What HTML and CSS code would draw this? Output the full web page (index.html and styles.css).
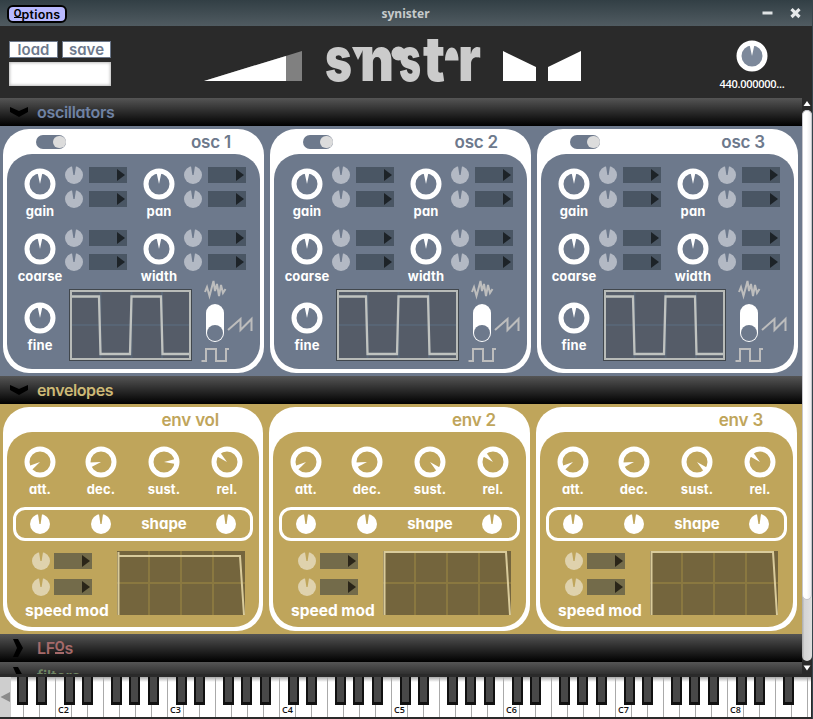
FILE: index.html
```html
<!DOCTYPE html>
<html lang="en">
<head>
<meta charset="utf-8">
<title>synister</title>
<link rel="stylesheet" href="styles.css">
</head>
<body>
<div class="window">
  <header class="titlebar">
    <button class="options"><span class="cap-o">O</span>ptions</button>
    <h1 class="window-title">synister</h1>
    <svg class="window-buttons" width="44" height="14" viewBox="0 0 44 14">
      <path d="M2.500 7H12.500" stroke="#dfe3e4" stroke-width="3"/>
      <path d="M31.500 3.200L39.500 11M39.500 3.200L31.500 11" stroke="#e6e9ea" stroke-width="3.200"/>
    </svg>
  </header>

  <div class="topbar">
    <div class="presets">
      <div class="preset-buttons"><button>load</button><button>save</button></div>
      <div class="preset-name"></div>
    </div>
    <svg class="volume" width="98" height="30" viewBox="0 0 98 30">
      <path d="M0 30L98 0V30Z" fill="#808080"/>
      <path d="M0 30L82 4.900V30Z" fill="#fff"/>
    </svg>
    <svg class="logo" width="156" height="42" viewBox="0 0 156 42">
      <g class="logo-letters">
        <text x="0" y="40" textLength="27" lengthAdjust="spacingAndGlyphs">s</text>
        <text x="35" y="40" textLength="34" lengthAdjust="spacingAndGlyphs">n</text>
        <text x="74" y="40" textLength="22" lengthAdjust="spacingAndGlyphs">s</text>
        <text x="98" y="40" textLength="22" lengthAdjust="spacingAndGlyphs">t</text>
        <text x="133" y="40" textLength="23" lengthAdjust="spacingAndGlyphs">r</text>
      </g>
      <path d="M27 6H39.500L33 19Z"/>
      <circle cx="73.500" cy="12.500" r="7"/>
      <path d="M120 19.500C120 2 133.500 2 133.500 19.500Z"/>
    </svg>
    <svg class="pan-shapes" width="78" height="30" viewBox="0 0 78 30">
      <path d="M0 0L33 16V30H0ZM78 0L45 16V30H78Z" fill="#fff"/>
    </svg>
    <div class="tuning">
      <svg width="32" height="32" viewBox="-16 -16 32 32">
        <circle r="13" fill="#7d899b" stroke="#fff" stroke-width="5"/>
        <path d="M-2.500 -11.500H2.500L0 0Z" fill="#fff"/>
      </svg>
      <span>440.000000...</span>
    </div>
  </div>

  <div class="main">
    <div class="sections">
      <h2 class="bar bar-osc"><svg width="20" height="12" viewBox="0 0 20 12"><path d="M1 1L10 5L19 1V6L10 11L1 6Z"/></svg><span>oscillators</span></h2>
      <section class="rack rack-osc" id="oscillators"></section>
      <h2 class="bar bar-env"><svg width="20" height="12" viewBox="0 0 20 12"><path d="M1 1L10 5L19 1V6L10 11L1 6Z"/></svg><span>envelopes</span></h2>
      <section class="rack rack-env" id="envelopes"></section>
      <h2 class="bar bar-lfo"><svg width="20" height="20" viewBox="0 0 20 20"><path d="M4 1H9L14 10L9 19H4L8 10Z"/></svg><span>LF<span class="cap-o">O</span>s</span></h2>
      <h2 class="bar bar-filter"><svg width="20" height="20" viewBox="0 0 20 20"><path d="M4 1H9L14 10L9 19H4L8 10Z"/></svg><span>filters</span></h2>
    </div>
    <div class="scrollbar">
      <svg width="10" height="12" viewBox="0 0 10 12"><path d="M1.500 8L5 3L8.500 8Z" fill="#fff"/></svg>
      <div class="track"><div class="thumb"></div></div>
      <svg width="10" height="13" viewBox="0 0 10 13"><path d="M1.500 4.500L5 9.500L8.500 4.500Z" fill="#fff"/></svg>
    </div>
  </div>

  <div class="keyboard">
    <div class="key-scroll"><svg width="11" height="40" viewBox="0 0 11 40"><path d="M.5 20L10 15V25Z" fill="#8a8a8a"/></svg></div>
    <div class="keys" id="keys"></div>
  </div>
</div>
<script src="app.js"></script>
</body>
</html>
```
FILE: styles.css
```css
* { box-sizing: border-box; }
body {
  margin: 0;
  background: #2a2a2a;
  font-family: Inter, "Noto Sans", sans-serif;
  font-feature-settings: "cv11";
}
h1, h2, h3 { margin: 0; font-weight: 600; }
button { font: inherit; font-feature-settings: inherit; padding: 0; }
svg { display: block; flex: none; }
.window { width: 813px; height: 719px; overflow: hidden; border-right: 1px solid #36444b; }

.titlebar {
  height: 26px;
  padding: 0 8px 0 7px;
  display: grid;
  grid-template-columns: 60px 1fr 60px;
  align-items: center;
  background: linear-gradient(#323f45, #505b61);
}
.options {
  width: 60px;
  height: 18px;
  margin-top: 2px;
  border: 2px solid #000;
  border-radius: 6px;
  background: #b9b9ff;
  color: #000;
  font-size: 12.5px;
  line-height: 13px;
  font-weight: 600;
  letter-spacing: .2px;
}
.cap-o {
  display: inline-block;
  font-size: .8em;
  line-height: .9;
  vertical-align: .2em;
  font-weight: 700;
  border-bottom: 2px solid;
}
.options .cap-o { line-height: .8; vertical-align: .12em; border-bottom-width: 1px; }
.window-title { text-align: center; font: 700 12px "Noto Sans", sans-serif; color: #c6cacb; }
.window-buttons { justify-self: end; }

.topbar { height: 72px; display: flex; align-items: flex-start; background: #2a2a2a; }
.presets { width: 102px; margin: 15px 0 0 9px; }
.preset-buttons { display: flex; justify-content: space-between; }
.preset-buttons button {
  width: 49px;
  height: 17px;
  border: 1px solid #6d798c;
  background: #fff;
  color: #6d798c;
  font-size: 15px;
  line-height: 14px;
  font-weight: 600;
}
.preset-name { height: 24px; margin-top: 4px; background: #fff; box-shadow: inset 0 0 3px 1px #bbb; }
.volume { margin: 25px 0 0 93px; }
.logo { margin: 15px 0 0 23px; fill: #cbcbcb; overflow: visible; }
.logo-letters { font-size: 62px; font-weight: 900; }
.pan-shapes { margin: 25px 0 0 22px; }
.tuning { width: 70px; margin: 14px 0 0 136px; display: flex; flex-direction: column; align-items: center; color: #fff; }
.tuning span { font: 600 11px/14px "Open Sans", sans-serif; letter-spacing: -.3px; margin-top: 5px; white-space: nowrap; }

.main { height: 576px; display: flex; }
.sections { width: 802px; overflow: hidden; }
.bar {
  height: 28px;
  padding-left: 9px;
  display: flex;
  align-items: center;
  gap: 8px;
  background: linear-gradient(#555, #222 60%, #000);
  font-size: 16px;
  line-height: 26px;
  letter-spacing: -.3px;
}
.bar > span { padding-bottom: 1px; }
.bar-osc { color: #6f82a3; }
.bar-env { color: #cdb976; letter-spacing: -.4px; }
.bar-lfo { color: #a56a6a; }
.bar-filter { color: #6f8463; }

.scrollbar { width: 10px; background: #2a2a2a; }
.track { height: 551px; border-radius: 5px; background: linear-gradient(90deg, #aaa, #d4d4d4 25%, #dedede); }
.thumb { height: 490px; border-radius: 5px; border: 1px solid #c6c6cc; background: linear-gradient(90deg, #fff 45%, #ececee); }

.rack { display: flex; gap: 6px; padding: 3px; }
.rack-osc { height: 250px; --tone: #6d798c; --mod: #b3b9c4; --slot: #4a5664; --slot-arrow: #1d2328; background: var(--tone); }
.rack-env { height: 230px; --tone: #bfa55b; --mod: #dfd2ad; --slot: #736b4a; --slot-arrow: #2a2518; background: var(--tone); }
.panel { flex: none; width: 261px; padding: 0 4px 4px; border-radius: 26px; background: #fff; }
.rack-osc .panel { height: 244px; }
.rack-env .panel { height: 224px; }
.rack-env .panel:first-child { width: 260px; }
.panel-head { height: 25px; display: flex; justify-content: space-between; align-items: center; padding: 0 29px; color: var(--tone); }
.panel-head h3 { font-size: 17px; line-height: 25px; letter-spacing: -.2px; margin: 2px 0 0 auto; }
.rack-env .panel-head { padding-right: 40px; }
.rack-env .panel:not(:first-child) .panel-head { padding-right: 30px; }
.panel-body { border-radius: 25px; background: var(--tone); color: #fff; }
.rack-osc .panel-body { height: 215px; }
.rack-env .panel-body { height: 195px; }
.toggle { width: 30px; height: 14px; border-radius: 7px; background: var(--tone); display: flex; justify-content: flex-end; padding: 1px 0; }
.toggle i { width: 13px; height: 12px; border-radius: 6px; background: #dcdcdc; }

.dial { flex: none; display: flex; flex-direction: column; align-items: center; width: 50px; }
.dial span { font-size: 13px; line-height: 16px; font-weight: 700; margin-top: 3px; letter-spacing: .1px; white-space: nowrap; }
.mod { display: flex; align-items: center; gap: 6px; height: 18px; }
.slot { flex: none; width: 38px; height: 16px; padding: 2px 1px 0 0; background: var(--slot); display: flex; justify-content: flex-end; }
.slot path { fill: var(--slot-arrow); }

.params { display: grid; grid-template-columns: 119px 119px; grid-auto-rows: 65px; }
.param { display: flex; padding-left: 8px; }
.param .dial { padding-top: 14px; }
.mods { flex: none; display: flex; flex-direction: column; gap: 6px; padding-top: 12px; }
.param:nth-child(n+3) .mods { padding-top: 10px; }
.osc-bottom { display: flex; padding-left: 8px; }
.osc-bottom .dial { padding-top: 18px; }
.scope { margin: 5px 0 0 4px; }
.wave-select { margin: -6px 0 0 8px; }

.adsr { display: grid; grid-template-columns: 61px 63px 63px 50px; padding: 14px 0 0 8px; }
.shape-row {
  height: 34px;
  margin: 10px 6px 0;
  border: 3px solid #fff;
  border-radius: 12px;
  display: grid;
  grid-template-columns: 48px 74px 52px 1fr;
  align-items: center;
  font-size: 15px;
  font-weight: 700;
}
.shape-row span { justify-self: center; line-height: 20px; margin-top: -1px; }
.shape-row svg { justify-self: start; margin-left: 14px; }
.shape-row svg:nth-child(2) { margin-left: 27px; }
.shape-row svg:last-child { margin-left: 26px; }
.env-bottom { display: flex; justify-content: space-between; padding: 10px 14px 0 18px; }
.panel:not(:first-child) .env-bottom { padding-right: 15px; }
.speed { width: 92px; padding-top: 1px; }
.speed .mod { margin-left: 7px; gap: 4px; }
.speed .mod + .mod { margin-top: 8px; }
.speed span { display: block; font-size: 15.500px; line-height: 20px; font-weight: 700; margin-top: 5px; white-space: nowrap; }

.keyboard { height: 45px; padding-top: 3px; display: flex; background: #2a2a2a; }
.key-scroll { width: 11px; height: 40px; background: #cecece; }
.keys { position: relative; width: 800px; height: 40px; display: flex; overflow: hidden; background: #fff; }
.white { flex: none; width: 16px; height: 40px; border-right: 1px solid #aaa; background: linear-gradient(#aaa, #fff 5px); display: flex; align-items: flex-end; justify-content: center; color: #111; font: 600 9px/15px "Open Sans", sans-serif; }
.white:first-child { width: 13px; }
.black { position: absolute; top: 0; width: 11px; height: 28px; border: solid #111; border-width: 0 2px 3px; background: #484848; }
```
FILE: app.js
```js
const dial = (label, angle = 0) => `
  <div class="dial">
    <svg width="32" height="32" viewBox="-16 -16 32 32">
      <circle r="13" fill="none" stroke="#fff" stroke-width="5"/>
      <path d="M-2.500 -11.500H2.500L0 0Z" fill="#fff" transform="rotate(${angle})"/>
    </svg>
    <span>${label}</span>
  </div>`;

const notched = (r, fill) => `
  <svg width="${r * 2}" height="${r * 2}" viewBox="${-r} ${-r} ${r * 2} ${r * 2}">
    <circle r="${r}" fill="${fill}"/>
    <path d="M-2 ${-r}H2L.6 0H-.6Z" fill="var(--tone)"/>
  </svg>`;

const mod = () => `
  <div class="mod">${notched(9, 'var(--mod)')}
    <div class="slot"><svg width="9" height="12" viewBox="0 0 9 12"><path d="M0 0L8 6L0 12Z"/></svg></div>
  </div>`;

const param = label => `<div class="param">${dial(label)}<div class="mods">${mod()}${mod()}</div></div>`;

const oscillator = name => `
  <article class="panel">
    <div class="panel-head"><div class="toggle"><i></i></div><h3>${name}</h3></div>
    <div class="panel-body">
      <div class="params">${['gain', 'pan', 'coarse', 'width'].map(param).join('')}</div>
      <div class="osc-bottom">
        ${dial('fine')}
        <svg class="scope" width="123" height="72" viewBox="0 0 123 72">
          <rect x=".5" y=".5" width="122" height="71" fill="#555c68" stroke="#41474d"/>
          <rect x="2" y="2" width="119" height="68" fill="none" stroke="#b8bbb8" stroke-width="2"/>
          <path d="M3 36H120M31.500 3V69M62.500 3V69M93 3V69" stroke="#586575" stroke-width="2" fill="none"/>
          <path d="M3 7.500H30L31.500 65H61L62.500 7.500H92L93.500 65H120" fill="none" stroke="#c0c3c0" stroke-width="2.300"/>
        </svg>
        <svg class="wave-select" width="54" height="88" viewBox="200 278 54 88">
          <g fill="none" stroke="#bdbdbd" stroke-width="2">
            <path d="M205 292L207 287L209.500 296L213.500 281L215 291L217 284L219 296L221 285L223 293L225.500 289"/>
            <path d="M228 330L240.500 319V330L251.500 319V331"/>
            <path d="M201.500 361H206V349H216V361H226V349H229"/>
          </g>
          <rect x="206" y="304" width="18" height="38" rx="9" fill="#fff"/>
          <circle cx="215" cy="333" r="8" fill="#6d798c"/>
        </svg>
      </div>
    </div>
  </article>`;

const envelope = ({ name, sustain, top }) => `
  <article class="panel">
    <div class="panel-head"><h3>${name}</h3></div>
    <div class="panel-body">
      <div class="adsr">${dial('att.', -122)}${dial('dec.', -105)}${dial('sust.', sustain)}${dial('rel.', -48)}</div>
      <div class="shape-row">${notched(10, '#fff')}${notched(10, '#fff')}<span>shape</span>${notched(10, '#fff')}</div>
      <div class="env-bottom">
        <div class="speed">${mod()}${mod()}<span>speed mod</span></div>
        <svg width="128" height="64" viewBox="0 0 128 64">
          <rect width="128" height="64" fill="#74653d"/>
          <path d="M32 0V64M64 0V64M96 0V64M0 32H128" stroke="#8a7840" stroke-width="2"/>
          <path d="M1.500 64V1V${top}H123L127 64" fill="none" stroke="#d9cb9b" stroke-width="2"/>
        </svg>
      </div>
    </div>
  </article>`;

document.getElementById('oscillators').innerHTML = ['osc 1', 'osc 2', 'osc 3'].map(oscillator).join('');
document.getElementById('envelopes').innerHTML = [
  { name: 'env vol', sustain: 88, top: 5 },
  { name: 'env 2', sustain: 132, top: 1 },
  { name: 'env 3', sustain: 132, top: 1 },
].map(envelope).join('');

const OCTAVE = 112;
const FIRST_C = 45;
let keys = '';
for (let i = 0; i < 51; i++) {
  const fromC = i - 3;
  const label = fromC >= 0 && fromC % 7 === 0 ? 'C' + (2 + fromC / 7) : '';
  keys += `<div class="white">${label}</div>`;
}
for (let octave = -1; octave < 7; octave++) {
  for (const offset of [8, 26, 55, 73, 92]) {
    const left = FIRST_C + octave * OCTAVE + offset;
    if (left > 0 && left < 780) keys += `<div class="black" style="left:${left}px"></div>`;
  }
}
document.getElementById('keys').innerHTML = keys;
```
